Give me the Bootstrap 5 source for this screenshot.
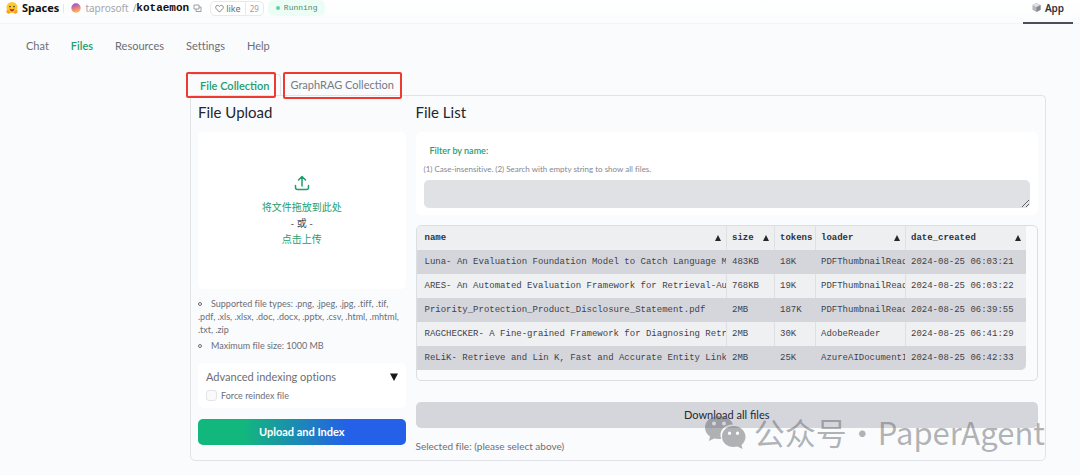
<!DOCTYPE html>
<html lang="en">
<head>
<meta charset="utf-8">
<meta name="viewport" content="width=device-width, initial-scale=1">
<title>kotaemon</title>
<link href="https://cdn.jsdelivr.net/npm/bootstrap@5.3.0/dist/css/bootstrap.min.css" rel="stylesheet">
<style>
:root { --green: #1f9d6b; --line: #e1e3e8; --mono: "Liberation Mono", monospace; }
body { font-family: Lato, "Noto Sans CJK SC", sans-serif; font-size: 10px; line-height: 14px; font-variant-ligatures: none; color: #6b6e76; background: #fafbfd; }
button, input, textarea { font-family: inherit; }
.topbar { height: 24px; padding: 0 7px 0 6px; background: linear-gradient(#fff, #fbfcfd); border-bottom: 1px solid #f3f4f6; font-family: "Noto Sans", sans-serif; }
.topbar a { text-decoration: none; color: inherit; }
.crumbs { height: 16px; }
.brand { font-size: 11px; font-weight: 700; color: #111 !important; }
.split { width: 1px; height: 9px; background: #e5e7eb; margin: 0 7px 0 4px; }
.owner { font-size: 10px; color: #a3a6ac !important; }
.repo { font: 700 11px/14px var(--mono); color: #111 !important; }
.like { height: 15px; border: 1px solid #e8e9ec; border-radius: 5px; background: #fff; font-size: 9px; line-height: 13px; color: #6f7278; }
.like svg { margin-right: 2px; }
.like .count { border-left: 1px solid #e8e9ec; font-size: 8px; color: #9a9da3; }
.running { height: 16px; border-radius: 6px; background: #ecfdf5; color: #4f8a72; font: 8px/16px var(--mono); }
.dot { width: 4px; height: 4px; border-radius: 50%; background: #5fd3a2; }
.apptab { width: 50px; height: 24px; padding-bottom: 7px; border-bottom: 2px solid #4b4d59; font-size: 10px; font-weight: 600; color: #2d3039 !important; }
.mainnav { padding: 14px 0 0 15px; }
.mainnav .nav-link { padding: 0 11px; font-size: 11px; line-height: 16px; color: #6b6e76; }
.mainnav .nav-link.active, .subtabs .nav-link.active { color: var(--green); font-weight: 600; }
.workspace { padding: 20px 34px 0 190px; }
.subtabs { height: 21px; }
.subtabs .nav-link { position: relative; height: 21px; padding: 0 10px; border: 0; background: none; font-size: 11px; line-height: 19px; color: #777a82; }
.subtabs .nav-link.active { border: solid var(--line); border-width: 1px 1px 0 0; border-radius: 4px 4px 0 0; }
.frame { position: absolute; z-index: 1; inset: -3px 4px -3px -4px; border: 2px solid #ee3a30; border-radius: 2px; }
.subtabs .nav-link + .nav-link .frame { inset: -2px 2px -4px 2px; }
.panel { position: relative; border: 1px solid var(--line); border-radius: 0 4px 5px 5px; padding: 7px; }
.split-cols { display: grid; grid-template-columns: 1fr 3fr; gap: 10px; }
h2 { margin: 0; font-size: 15px; line-height: 18px; height: 29px; font-weight: 400; color: #24262d; }
.tile { background: #fff; border-radius: 5px; }
.drop { width: 100%; height: 157px; border: 0; padding: 0; color: var(--green); font-size: 10px; line-height: 16px; }
.drop .or { color: #4c4f57; }
.notes { list-style: none; margin: 8px 0 0; padding: 0; font-size: 9px; line-height: 13px; }
.notes li { margin-bottom: 3px; }
.notes li::before { content: ""; display: inline-block; width: 4px; height: 4px; border: 1px solid #6b6e76; border-radius: 50%; margin-right: 9px; vertical-align: 1px; }
.options { margin-top: 11px; padding: 6px 8px; height: 45px; }
.options summary { display: flex; justify-content: space-between; align-items: center; font-size: 11px; line-height: 16px; }
.options label { font-size: 9px; line-height: 13px; }
.options input { appearance: none; width: 11px; height: 11px; margin: 0; border: 1px solid #e4e5e8; border-radius: 3px; background: #fafafa; }
.btn-index { height: 26px; margin-top: 11px; padding: 0; border: 0; border-radius: 5px; background: linear-gradient(90deg, #12b77d 22%, #2460e8 72%); color: #fff; font-size: 11px; font-weight: 700; line-height: 26px; }
.filter { height: 83px; padding: 12px 8px 0; }
.filter label { display: block; padding-left: 6px; margin-bottom: 6px; color: var(--green); font-size: 9px; line-height: 13px; font-weight: 600; }
.filter p { margin: 0 0 4px; font-size: 8px; line-height: 13px; color: #85888e; }
.filter textarea { display: block; width: 100%; height: 28px; border: 0; border-radius: 5px; background: #e0e1e5; resize: vertical; }
.tablebox { margin-top: 10px; padding: 0 11px 10px 0; border: 1px solid #dcdee2; border-radius: 5px; overflow: hidden; }
.files { width: 100%; table-layout: fixed; border-collapse: separate; border-spacing: 0; font: 9px/14px var(--mono); color: #3f424a; }
.files th, .files td { height: 24px; padding: 0 0 0 5px; overflow: hidden; white-space: nowrap; border-left: 1px solid #dfe0e4; background: #eff0f2; }
.files th:first-child, .files td:first-child { padding-left: 8px; border-left: 0; }
.files th { font-weight: 700; color: #30333a; background: #eeeff1; }
.files tbody tr:nth-child(odd) td { background: #d5d6dc; border-color: #d5d6dc; }
.files tr:last-child td:last-child { border-bottom-right-radius: 5px; }
.sort { float: right; margin: 4px 5px 0 0; }
.btn-all { height: 26px; margin-top: 21px; padding: 0; border: 0; border-radius: 5px; background: #d5d6dc; color: #25272e; font-size: 11px; font-weight: 400; line-height: 26px; }
.selected { margin: 11px 0 0; font-size: 10px; line-height: 14px; }
.watermark { position: absolute; right: 0; bottom: 6px; color: rgba(95, 97, 102, .48); font: 31px/44px "Noto Sans CJK SC", sans-serif; pointer-events: none; }
.watermark .sep { width: 31px; text-align: center; }
</style>
</head>
<body>
<header class="topbar d-flex justify-content-between">
  <div class="crumbs d-flex align-items-center">
    <svg class="me-1" width="12" height="12" viewBox="0 0 24 24" aria-hidden="true"><circle cx="12" cy="11" r="11" fill="#ffc928"/><circle cx="8" cy="9" r="1.7" fill="#3a3b45"/><circle cx="16" cy="9" r="1.7" fill="#3a3b45"/><path d="M7 13q5 3 10 0q-1 6-5 6t-5-6z" fill="#b5392d"/><path d="M1 17q4-3 8 5q-5 3-8-1zM23 17q-4-3-8 5q5 3 8-1z" fill="#ff9d1e"/></svg>
    <a class="brand" href="#">Spaces</a>
    <span class="split"></span>
    <svg class="me-1" width="10" height="10" viewBox="0 0 10 10" aria-hidden="true"><defs><linearGradient id="av" x1="0" y1="0" x2=".3" y2="1"><stop offset=".1" stop-color="#8a55d8"/><stop offset=".55" stop-color="#e0788e"/><stop offset="1" stop-color="#ffb34d"/></linearGradient></defs><circle cx="5" cy="5" r="4.7" fill="url(#av)"/></svg>
    <a class="owner" href="#">taprosoft</a><span class="owner px-1 pe-0">/</span><a class="repo" href="#">kotaemon</a>
    <svg class="mx-1" width="9" height="9" viewBox="0 0 9 9" fill="none" stroke="#9b9ea5" aria-hidden="true"><path d="M1 1h5v4H1zM3 5v2.500h5V3H6"/></svg>
    <button class="like btn p-0 d-flex ms-1" type="button"><span class="px-1 d-flex align-items-center"><svg width="9" height="9" viewBox="0 0 10 10" fill="none" stroke="#777" aria-hidden="true"><path d="M5 9L1.200 5C-.5 2.500 3 0 5 2.700C7 0 10.500 2.500 8.800 5z"/></svg>like</span><span class="count px-1">29</span></button>
    <span class="running d-flex align-items-center gap-1 px-2 ms-1"><i class="dot"></i>Running</span>
  </div>
  <a class="apptab d-flex align-items-center justify-content-center gap-1" href="#"><svg width="9" height="9" viewBox="0 0 10 10" aria-hidden="true"><path d="M5 0L9.500 2.200V7.500L5 10L.5 7.500V2.200z" fill="#b5b7bb"/><path d="M5 0L9.500 2.200L5 4.700L.5 2.200z" fill="#dddee0"/><path d="M5 4.700L9.500 2.200V7.500L5 10z" fill="#85888e"/></svg>App</a>
</header>

<nav class="mainnav nav">
  <a class="nav-link" href="#">Chat</a>
  <a class="nav-link active" href="#">Files</a>
  <a class="nav-link" href="#">Resources</a>
  <a class="nav-link" href="#">Settings</a>
  <a class="nav-link" href="#">Help</a>
</nav>

<main class="workspace">
  <div class="subtabs nav" role="tablist">
    <button class="nav-link active" type="button" role="tab" aria-selected="true">File Collection<span class="frame"></span></button>
    <button class="nav-link" type="button" role="tab" aria-selected="false">GraphRAG Collection<span class="frame"></span></button>
  </div>
  <div class="panel">
    <div class="split-cols">
      <section>
        <h2>File Upload</h2>
        <button class="drop tile d-flex flex-column align-items-center justify-content-center" type="button">
          <svg class="mb-2" width="16" height="16" viewBox="0 0 16 16" fill="none" stroke="currentColor" stroke-width="1.500" stroke-linecap="round" stroke-linejoin="round" aria-hidden="true"><path d="M8 11V2M4.500 5L8 1.500L11.500 5M1.500 10.500V12.500q0 2 2 2h9q2 0 2-2V10.500"/></svg>
          <span>将文件拖放到此处</span><span class="or">- 或 -</span><span>点击上传</span>
        </button>
        <ul class="notes">
          <li>Supported file types: .png, .jpeg, .jpg, .tiff, .tif, .pdf, .xls, .xlsx, .doc, .docx, .pptx, .csv, .html, .mhtml, .txt, .zip</li>
          <li>Maximum file size: 1000 MB</li>
        </ul>
        <details class="options tile" open>
          <summary>Advanced indexing options<svg width="8" height="8" viewBox="0 0 8 8" aria-hidden="true"><path d="M0 .5h8L4 8z" fill="#17181c"/></svg></summary>
          <div class="d-flex align-items-center gap-1 mt-1"><input type="checkbox" id="force"><label for="force">Force reindex file</label></div>
        </details>
        <button class="btn btn-index w-100" type="button">Upload and Index</button>
      </section>
      <section>
        <h2>File List</h2>
        <div class="filter tile">
          <label for="filter">Filter by name:</label>
          <p>(1) Case-insensitive. (2) Search with empty string to show all files.</p>
          <textarea id="filter"></textarea>
        </div>
        <div class="tablebox">
          <table class="files">
            <colgroup><col><col style="width:48px"><col style="width:41px"><col style="width:90px"><col style="width:121px"></colgroup>
            <thead><tr>
              <th>name<svg class="sort" width="6" height="6" viewBox="0 0 6 6"><path d="M3 0l3 6H0z" fill="#25272e"/></svg></th>
              <th>size<svg class="sort" width="6" height="6" viewBox="0 0 6 6"><path d="M3 0l3 6H0z" fill="#25272e"/></svg></th>
              <th>tokens</th>
              <th>loader<svg class="sort" width="6" height="6" viewBox="0 0 6 6"><path d="M3 0l3 6H0z" fill="#25272e"/></svg></th>
              <th>date_created<svg class="sort" width="6" height="6" viewBox="0 0 6 6"><path d="M3 0l3 6H0z" fill="#25272e"/></svg></th>
            </tr></thead>
            <tbody>
              <tr><td>Luna- An Evaluation Foundation Model to Catch Language M</td><td>483KB</td><td>18K</td><td>PDFThumbnailReader</td><td>2024-08-25 06:03:21</td></tr>
              <tr><td>ARES- An Automated Evaluation Framework for Retrieval-Au</td><td>768KB</td><td>19K</td><td>PDFThumbnailReader</td><td>2024-08-25 06:03:22</td></tr>
              <tr><td>Priority_Protection_Product_Disclosure_Statement.pdf</td><td>2MB</td><td>187K</td><td>PDFThumbnailReader</td><td>2024-08-25 06:39:55</td></tr>
              <tr><td>RAGCHECKER- A Fine-grained Framework for Diagnosing Retri</td><td>2MB</td><td>30K</td><td>AdobeReader</td><td>2024-08-25 06:41:29</td></tr>
              <tr><td>ReLiK- Retrieve and Lin K, Fast and Accurate Entity Link</td><td>2MB</td><td>25K</td><td>AzureAIDocumentI</td><td>2024-08-25 06:42:33</td></tr>
            </tbody>
          </table>
        </div>
        <button class="btn btn-all w-100" type="button">Download all files</button>
        <p class="selected">Selected file: (please select above)</p>
      </section>
    </div>
    <div class="watermark d-flex align-items-center"><svg class="me-2" width="42" height="34" viewBox="0 0 42 34" aria-hidden="true"><path fill="currentColor" fill-rule="evenodd" d="M15 1C7 1 1 6 1 12.500c0 4 2 7 5 9L5 26l5-2.500 5 .5h2.200C14.500 16 20 9.500 29 9.500 27 4 22 1 15 1zM10 6.500a2 2 0 1 1 0 4 2 2 0 0 1 0-4zM20 6.500a2 2 0 1 1 0 4 2 2 0 0 1 0-4zM29.500 11C23 11 18 15.500 18 21.500S23 32 29.500 32l4-.5 5 2.500-1-4c2.500-2 4-5 4-8.500C41.500 16 36 11 29.500 11zM25.500 16.500a1.700 1.700 0 1 1 0 3.400 1.700 1.700 0 0 1 0-3.400zM33.500 16.500a1.700 1.700 0 1 1 0 3.400 1.700 1.700 0 0 1 0-3.400z"/></svg><span>公众号</span><span class="sep">·</span><span>PaperAgent</span></div>
  </div>
</main>
<script src="https://cdn.jsdelivr.net/npm/bootstrap@5.3.0/dist/js/bootstrap.bundle.min.js"></script>
</body>
</html>
